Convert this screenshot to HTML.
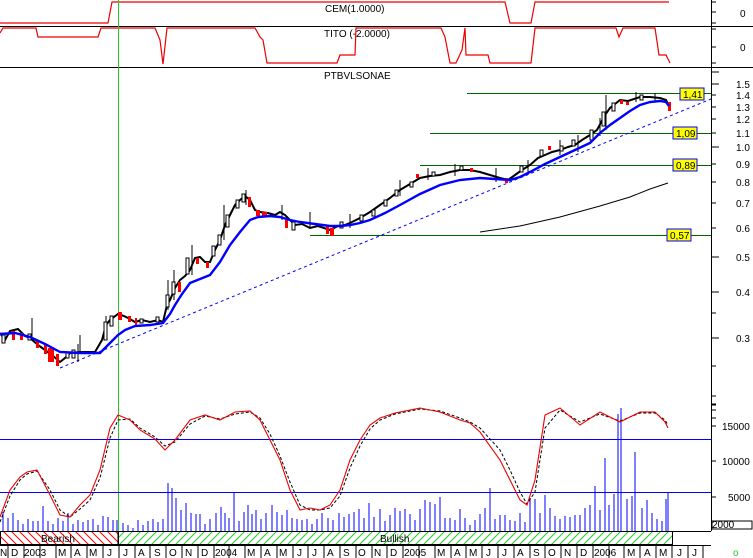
<!DOCTYPE html>
<html><head><meta charset="utf-8"><style>
html,body{margin:0;padding:0;background:#fff}
svg{display:block}
text{font-family:"Liberation Sans",sans-serif;font-size:10px;fill:#000}
</style></head><body>
<svg width="753" height="558" viewBox="0 0 753 558" xmlns="http://www.w3.org/2000/svg">
<defs>
<pattern id="hr" width="8" height="8" patternUnits="userSpaceOnUse"><path d="M0,0 L8,8 M-4,4 L4,12 M4,-4 L12,4" stroke="#f00" stroke-width="1"/></pattern>
<pattern id="hg" width="8" height="8" patternUnits="userSpaceOnUse"><path d="M0,8 L8,0 M-4,4 L4,-4 M4,12 L12,4" stroke="#2c2" stroke-width="1"/></pattern>
</defs>
<rect width="753" height="558" fill="#fff"/>
<line x1="0" y1="26.5" x2="753" y2="26.5" stroke="#000"/>
<line x1="0" y1="67.5" x2="753" y2="67.5" stroke="#000"/>
<line x1="711.5" y1="0" x2="711.5" y2="531" stroke="#000"/>
<!-- CEM -->
<text x="325" y="12">CEM(1.0000)</text>
<polyline fill="none" stroke="#e00" stroke-width="1.2" points="0,23 108,23 112,2 505,2 510,23 531,23 535,2 669,2"/>
<g stroke="#000"><line x1="711" y1="2" x2="716" y2="2"/><line x1="711" y1="12" x2="716" y2="12"/><line x1="711" y1="23" x2="716" y2="23"/></g>
<text x="740" y="17">0</text>
<!-- TITO -->
<text x="324" y="37">TITO (-2.0000)</text>
<polyline fill="none" stroke="#e00" stroke-width="1.2" points="0,33 3,28 36,28 38,37 98,37 101,28 155,28 160,40 163,64 167,28 255,28 260,37 263,40 267,63 337,63 340,55 355,55 356,28 441,28 445,37 450,63 456,63 462,50 465,28 466,55 488,55 490,63 531,63 535,28 616,28 619,37 623,28 655,28 659,55 666,55 670,63"/>
<g stroke="#000"><line x1="711" y1="29" x2="716" y2="29"/><line x1="711" y1="47" x2="716" y2="47"/><line x1="711" y1="63" x2="716" y2="63"/></g>
<text x="740" y="51">0</text>
<text x="324" y="79">PTBVLSONAE</text>
<g stroke="#000">
<line x1="711" y1="72" x2="719" y2="72"/><line x1="711" y1="84" x2="719" y2="84"/><line x1="711" y1="95" x2="716" y2="95"/><line x1="711" y1="107" x2="716" y2="107"/><line x1="711" y1="119" x2="716" y2="119"/><line x1="711" y1="133" x2="716" y2="133"/><line x1="711" y1="147" x2="719" y2="147"/><line x1="711" y1="164" x2="716" y2="164"/><line x1="711" y1="182" x2="716" y2="182"/><line x1="711" y1="203" x2="716" y2="203"/><line x1="711" y1="228" x2="716" y2="228"/><line x1="711" y1="257" x2="719" y2="257"/><line x1="711" y1="292" x2="719" y2="292"/><line x1="711" y1="313" x2="716" y2="313"/><line x1="711" y1="338" x2="719" y2="338"/><line x1="711" y1="366" x2="716" y2="366"/><line x1="711" y1="396" x2="716" y2="396"/><line x1="711" y1="404" x2="716" y2="404"/><line x1="711" y1="410" x2="716" y2="410"/><line x1="711" y1="418" x2="716" y2="418"/>
</g>
<g>
<text x="736" y="88">1.5</text><text x="736" y="99">1.4</text><text x="736" y="111">1.3</text><text x="736" y="123">1.2</text><text x="736" y="137">1.1</text><text x="736" y="151">1.0</text><text x="736" y="168">0.9</text><text x="736" y="186">0.8</text><text x="736" y="207">0.7</text><text x="736" y="232">0.6</text><text x="736" y="261">0.5</text><text x="736" y="296">0.4</text><text x="736" y="342">0.3</text>
</g>
<g stroke="#060">
<line x1="467" y1="93.5" x2="711" y2="93.5"/><line x1="430" y1="133.5" x2="711" y2="133.5"/><line x1="420" y1="165.5" x2="711" y2="165.5"/><line x1="310" y1="235.5" x2="711" y2="235.5"/>
</g>
<line x1="118.5" y1="0" x2="118.5" y2="531" stroke="#2c2"/>
<line x1="60" y1="368" x2="711" y2="99" stroke="#00f" stroke-dasharray="3,3"/>
<polyline fill="none" stroke="#000" points="480,232 520,226 560,217 600,206 630,197 650,189 668,183"/>
<!-- price -->
<polyline fill="none" stroke="#000" stroke-width="2" points="0,333 5,340 10,331 18,329 25,336 30,338 38,345 45,350 52,355 60,362 65,358 70,353 80,352 95,352 102,340 106,325 110,320 118,314 124,316 128,318 135,322 142,320 150,322 158,320 163,322 167,305 170,300 175,288 180,280 185,276 190,270 195,258 200,257 205,262 210,262 215,250 220,240 225,225 230,215 235,205 240,200 245,196 250,200 255,210 260,212 268,213 275,215 280,212 285,215 290,220 295,225 302,224 310,228 318,226 330,230 338,226 345,225 352,222 360,218 370,212 380,205 390,198 400,190 410,184 420,178 430,176 440,175 450,172 460,170 470,170 480,172 490,175 500,178 508,180 515,175 522,170 530,165 538,158 545,155 552,152 560,150 568,147 575,145 582,140 590,135 597,130 605,115 610,108 620,100 628,101 640,97 650,97 660,98 666,100 670,108"/>
<g stroke="#000">
<path d="M32,318V340 M80,335V352 M78,344V362 M106,316V340 M168,280V310 M174,270V300 M192,245V275 M224,205V240 M246,190V205 M282,205V220 M310,212V228 M350,214V228 M400,180V196 M428,168V180 M455,164V176 M496,168V182 M528,160V172 M560,140V155 M578,135V152 M600,118V136 M606,95V130 M636,92V102 M655,93V102"/>
</g>
<g fill="#f00">
<rect x="12" y="331" width="3" height="9"/><rect x="20" y="333" width="3" height="7"/><rect x="36" y="340" width="3" height="8"/><rect x="44" y="344" width="3" height="10"/><rect x="48" y="348" width="6" height="14"/><rect x="56" y="354" width="3" height="12"/>
<rect x="118" y="312" width="4" height="8"/><rect x="128" y="316" width="3" height="6"/><rect x="135" y="318" width="2" height="8"/><rect x="196" y="258" width="3" height="6"/><rect x="206" y="262" width="3" height="6"/><rect x="178" y="282" width="3" height="10"/>
<rect x="248" y="197" width="3" height="10"/><rect x="256" y="210" width="4" height="6"/><rect x="262" y="212" width="5" height="4"/><rect x="285" y="220" width="3" height="8"/><rect x="330" y="228" width="4" height="8"/><rect x="326" y="226" width="3" height="8"/>
<rect x="416" y="174" width="3" height="4"/><rect x="470" y="168" width="3" height="4"/><rect x="505" y="178" width="3" height="5"/><rect x="548" y="146" width="3" height="4"/><rect x="620" y="100" width="3" height="4"/><rect x="626" y="102" width="3" height="3"/><rect x="668" y="102" width="3" height="9"/>
</g>
<g fill="#fff" stroke="#000">
<rect x="2" y="335" width="3" height="8"/><rect x="28" y="334" width="3" height="6"/><rect x="66" y="352" width="3" height="6"/><rect x="72" y="350" width="3" height="8"/><rect x="104" y="322" width="3" height="18"/><rect x="110" y="316" width="3" height="10"/>
<rect x="140" y="319" width="3" height="4"/><rect x="156" y="317" width="3" height="5"/><rect x="166" y="295" width="3" height="12"/><rect x="172" y="282" width="3" height="12"/><rect x="186" y="258" width="3" height="16"/><rect x="212" y="246" width="3" height="10"/><rect x="218" y="235" width="3" height="10"/><rect x="226" y="215" width="3" height="12"/><rect x="236" y="200" width="3" height="8"/><rect x="242" y="194" width="3" height="8"/>
<rect x="292" y="222" width="3" height="8"/><rect x="340" y="222" width="3" height="6"/><rect x="360" y="215" width="3" height="6"/><rect x="372" y="210" width="3" height="6"/><rect x="384" y="200" width="3" height="6"/><rect x="395" y="190" width="3" height="6"/><rect x="410" y="182" width="3" height="5"/><rect x="432" y="172" width="3" height="4"/><rect x="460" y="166" width="3" height="4"/>
<rect x="520" y="166" width="3" height="6"/><rect x="540" y="150" width="3" height="6"/><rect x="560" y="146" width="3" height="5"/><rect x="572" y="140" width="3" height="6"/><rect x="590" y="130" width="3" height="10"/><rect x="602" y="112" width="3" height="14"/><rect x="612" y="103" width="3" height="8"/><rect x="640" y="95" width="3" height="5"/>
</g>
<polyline fill="none" stroke="#00f" stroke-width="2.4" points="0,334 15,333 30,337 45,344 60,352 80,353 100,353 108,345 118,335 125,330 135,326 150,325 163,323 170,314 175,305 182,294 190,283 200,279 210,275 220,262 230,245 240,232 250,220 258,217 270,216 280,217 290,220 300,222 315,224 330,226 340,226 350,225 360,223 370,220 385,213 400,205 420,194 440,185 460,180 480,178 495,179 510,180 520,177 530,172 545,164 560,157 575,150 590,143 600,133 610,125 620,118 630,111 640,105 650,102 660,101 666,102 669,106"/>
<g>
<rect x="680" y="88" width="24" height="12" fill="#ff0" stroke="#00f"/><text x="683" y="98">1,41</text>
<rect x="673" y="127" width="24" height="12" fill="#ff0" stroke="#00f"/><text x="676" y="137">1,09</text>
<rect x="673" y="159" width="24" height="12" fill="#ff0" stroke="#00f"/><text x="676" y="169">0,89</text>
<rect x="667" y="229" width="24" height="12" fill="#ff0" stroke="#00f"/><text x="670" y="239">0,57</text>
</g>
<line x1="0" y1="439.5" x2="711" y2="439.5" stroke="#00f"/>
<line x1="0" y1="492.5" x2="711" y2="492.5" stroke="#00f"/>
<g stroke="#000"><line x1="711" y1="405" x2="716" y2="405"/><line x1="711" y1="426" x2="716" y2="426"/><line x1="711" y1="461" x2="716" y2="461"/><line x1="711" y1="497" x2="716" y2="497"/></g>
<text x="722" y="430">15000</text><text x="722" y="465">10000</text><text x="728" y="501">5000</text>
<rect x="712" y="521" width="40" height="8" fill="#fff" stroke="#000"/><text x="712" y="528" font-size="8">2000</text>
<g stroke="#00f">
<path d="M3,531V512 M8,531V518 M13,531V513 M18,531V520 M23,531V524 M28,531V519 M33,531V521 M38,531V521 M43,531V506 M48,531V521 M53,531V524 M58,531V518 M63,531V521 M68,531V513 M73,531V524 M78,531V520 M83,531V522 M88,531V520 M93,531V519 M98,531V525 M103,531V516 M108,531V517 M113,531V520 M117,531V520 M123,531V523 M128,531V525 M133,531V528 M138,531V520 M143,531V525 M148,531V521 M153,531V519 M158,531V522 M163,531V519 M168,531V483 M172,531V488 M176,531V498 M181,531V510 M186,531V503 M191,531V513 M196,531V514 M200,531V514 M205,531V524 M210,531V519 M216,531V513 M221,531V507 M225,531V513 M229,531V518 M234,531V493 M239,531V521 M244,531V512 M248,531V505 M252,531V514 M256,531V510 M261,531V519 M266,531V513 M272,531V505 M277,531V512 M282,531V515 M287,531V510 M292,531V518 M297,531V519 M302,531V520 M307,531V519 M312,531V524 M317,531V519 M322,531V513 M328,531V518 M333,531V520 M339,531V513 M344,531V517 M349,531V514 M354,531V512 M359,531V509 M364,531V518 M369,531V503 M374,531V517 M380,531V509 M385,531V521 M390,531V515 M395,531V508 M400,531V511 M405,531V509 M410,531V514 M415,531V520 M420,531V509 M425,531V500 M430,531V502 M435,531V504 M440,531V497 M445,531V518 M450,531V518 M455,531V520 M460,531V509 M465,531V518 M470,531V525 M475,531V520 M480,531V514 M485,531V508 M490,531V488 M495,531V519 M500,531V515 M505,531V515 M510,531V520 M515,531V521 M520,531V513 M525,531V522 M530,531V498 M535,531V499 M540,531V513 M545,531V495 M550,531V508 M555,531V516 M560,531V519 M565,531V516 M570,531V517 M575,531V515 M580,531V515 M585,531V508 M590,531V505 M595,531V486 M600,531V510 M605,531V458 M609,531V505 M614,531V494 M618,531V414 M621,531V408 M627,531V499 M632,531V496 M635,531V452 M642,531V508 M647,531V500 M652,531V513 M657,531V519 M662,531V521 M666,531V499 M668,531V493"/>
</g>
<polyline fill="none" stroke="#000" stroke-dasharray="3,2" points="0,522 10,496 20,480 27,474 37,471 50,490 60,510 70,517 80,509 90,500 100,478 110,438 118,420 130,419 140,428 155,437 165,446 175,442 190,424 205,416 220,419 235,414 250,412 260,418 270,434 280,456 290,482 300,505 310,510 320,510 330,508 340,496 350,468 360,446 370,429 380,420 395,414 420,409 440,411 460,418 470,422 480,428 500,450 510,470 520,492 527,504 535,492 545,428 560,410 580,422 600,414 620,421 640,413 655,413 665,420 668,425"/>
<polyline fill="none" stroke="#e00" stroke-width="1.1" points="0,517 10,490 20,477 27,472 37,470 50,495 60,515 70,517 80,505 90,495 100,470 110,428 118,415 130,420 140,430 155,439 165,450 175,440 190,420 205,415 220,420 235,412 250,411 260,420 270,440 280,460 290,490 300,510 310,508 320,510 330,505 340,490 350,460 360,440 370,425 380,418 395,413 420,408 440,412 460,420 470,423 480,432 500,460 510,480 520,500 527,505 535,480 545,415 560,408 580,425 600,412 620,422 640,412 655,412 665,422 668,428"/>
<line x1="0" y1="531.5" x2="711" y2="531.5" stroke="#000"/>
<rect x="0.5" y="531.5" width="117.5" height="13" fill="url(#hr)" stroke="#000"/>
<rect x="118.5" y="531.5" width="554" height="13" fill="url(#hg)" stroke="#000"/>
<text x="41" y="542">Bearish</text>
<text x="380" y="542">Bullish</text>
<line x1="0" y1="545.5" x2="711" y2="545.5" stroke="#000"/>
<g stroke="#000">
<path d="M8,545V558 M24,545V558 M40,545V558 M56,545V558 M71,545V558 M87,545V558 M103,545V558 M119,545V558 M135,545V558 M150,545V558 M166,545V558 M182,545V558 M198,545V558 M214,545V558 M229,545V558 M245,545V558 M261,545V558 M277,545V558 M293,545V558 M308,545V558 M324,545V558 M340,545V558 M356,545V558 M372,545V558 M387,545V558 M403,545V558 M419,545V558 M435,545V558 M451,545V558 M466,545V558 M482,545V558 M498,545V558 M514,545V558 M530,545V558 M545,545V558 M561,545V558 M577,545V558 M593,545V558 M609,545V558 M624,545V558 M640,545V558 M656,545V558 M672,545V558 M688,545V558 M703,545V558"/>
</g>
<g>
<text x="0" y="556">N</text><text x="11" y="556">D</text><text x="24" y="556">2003</text><text x="58" y="556">M</text><text x="74" y="556">A</text><text x="89" y="556">M</text><text x="107" y="556">J</text><text x="123" y="556">J</text><text x="138" y="556">A</text><text x="154" y="556">S</text><text x="169" y="556">O</text><text x="185" y="556">N</text><text x="201" y="556">D</text><text x="215" y="556">2004</text><text x="247" y="556">M</text><text x="264" y="556">A</text><text x="279" y="556">M</text><text x="297" y="556">J</text><text x="312" y="556">J</text><text x="327" y="556">A</text><text x="343" y="556">S</text><text x="358" y="556">O</text><text x="374" y="556">N</text><text x="390" y="556">D</text><text x="404" y="556">2005</text><text x="437" y="556">M</text><text x="454" y="556">A</text><text x="469" y="556">M</text><text x="486" y="556">J</text><text x="502" y="556">J</text><text x="517" y="556">A</text><text x="533" y="556">S</text><text x="548" y="556">O</text><text x="564" y="556">N</text><text x="580" y="556">D</text><text x="594" y="556">2006</text><text x="627" y="556">M</text><text x="644" y="556">A</text><text x="659" y="556">M</text><text x="677" y="556">J</text><text x="692" y="556">J</text>
</g>
<text x="733" y="556" font-size="9" style="fill:#2c2">o</text>
</svg>
</body></html>
